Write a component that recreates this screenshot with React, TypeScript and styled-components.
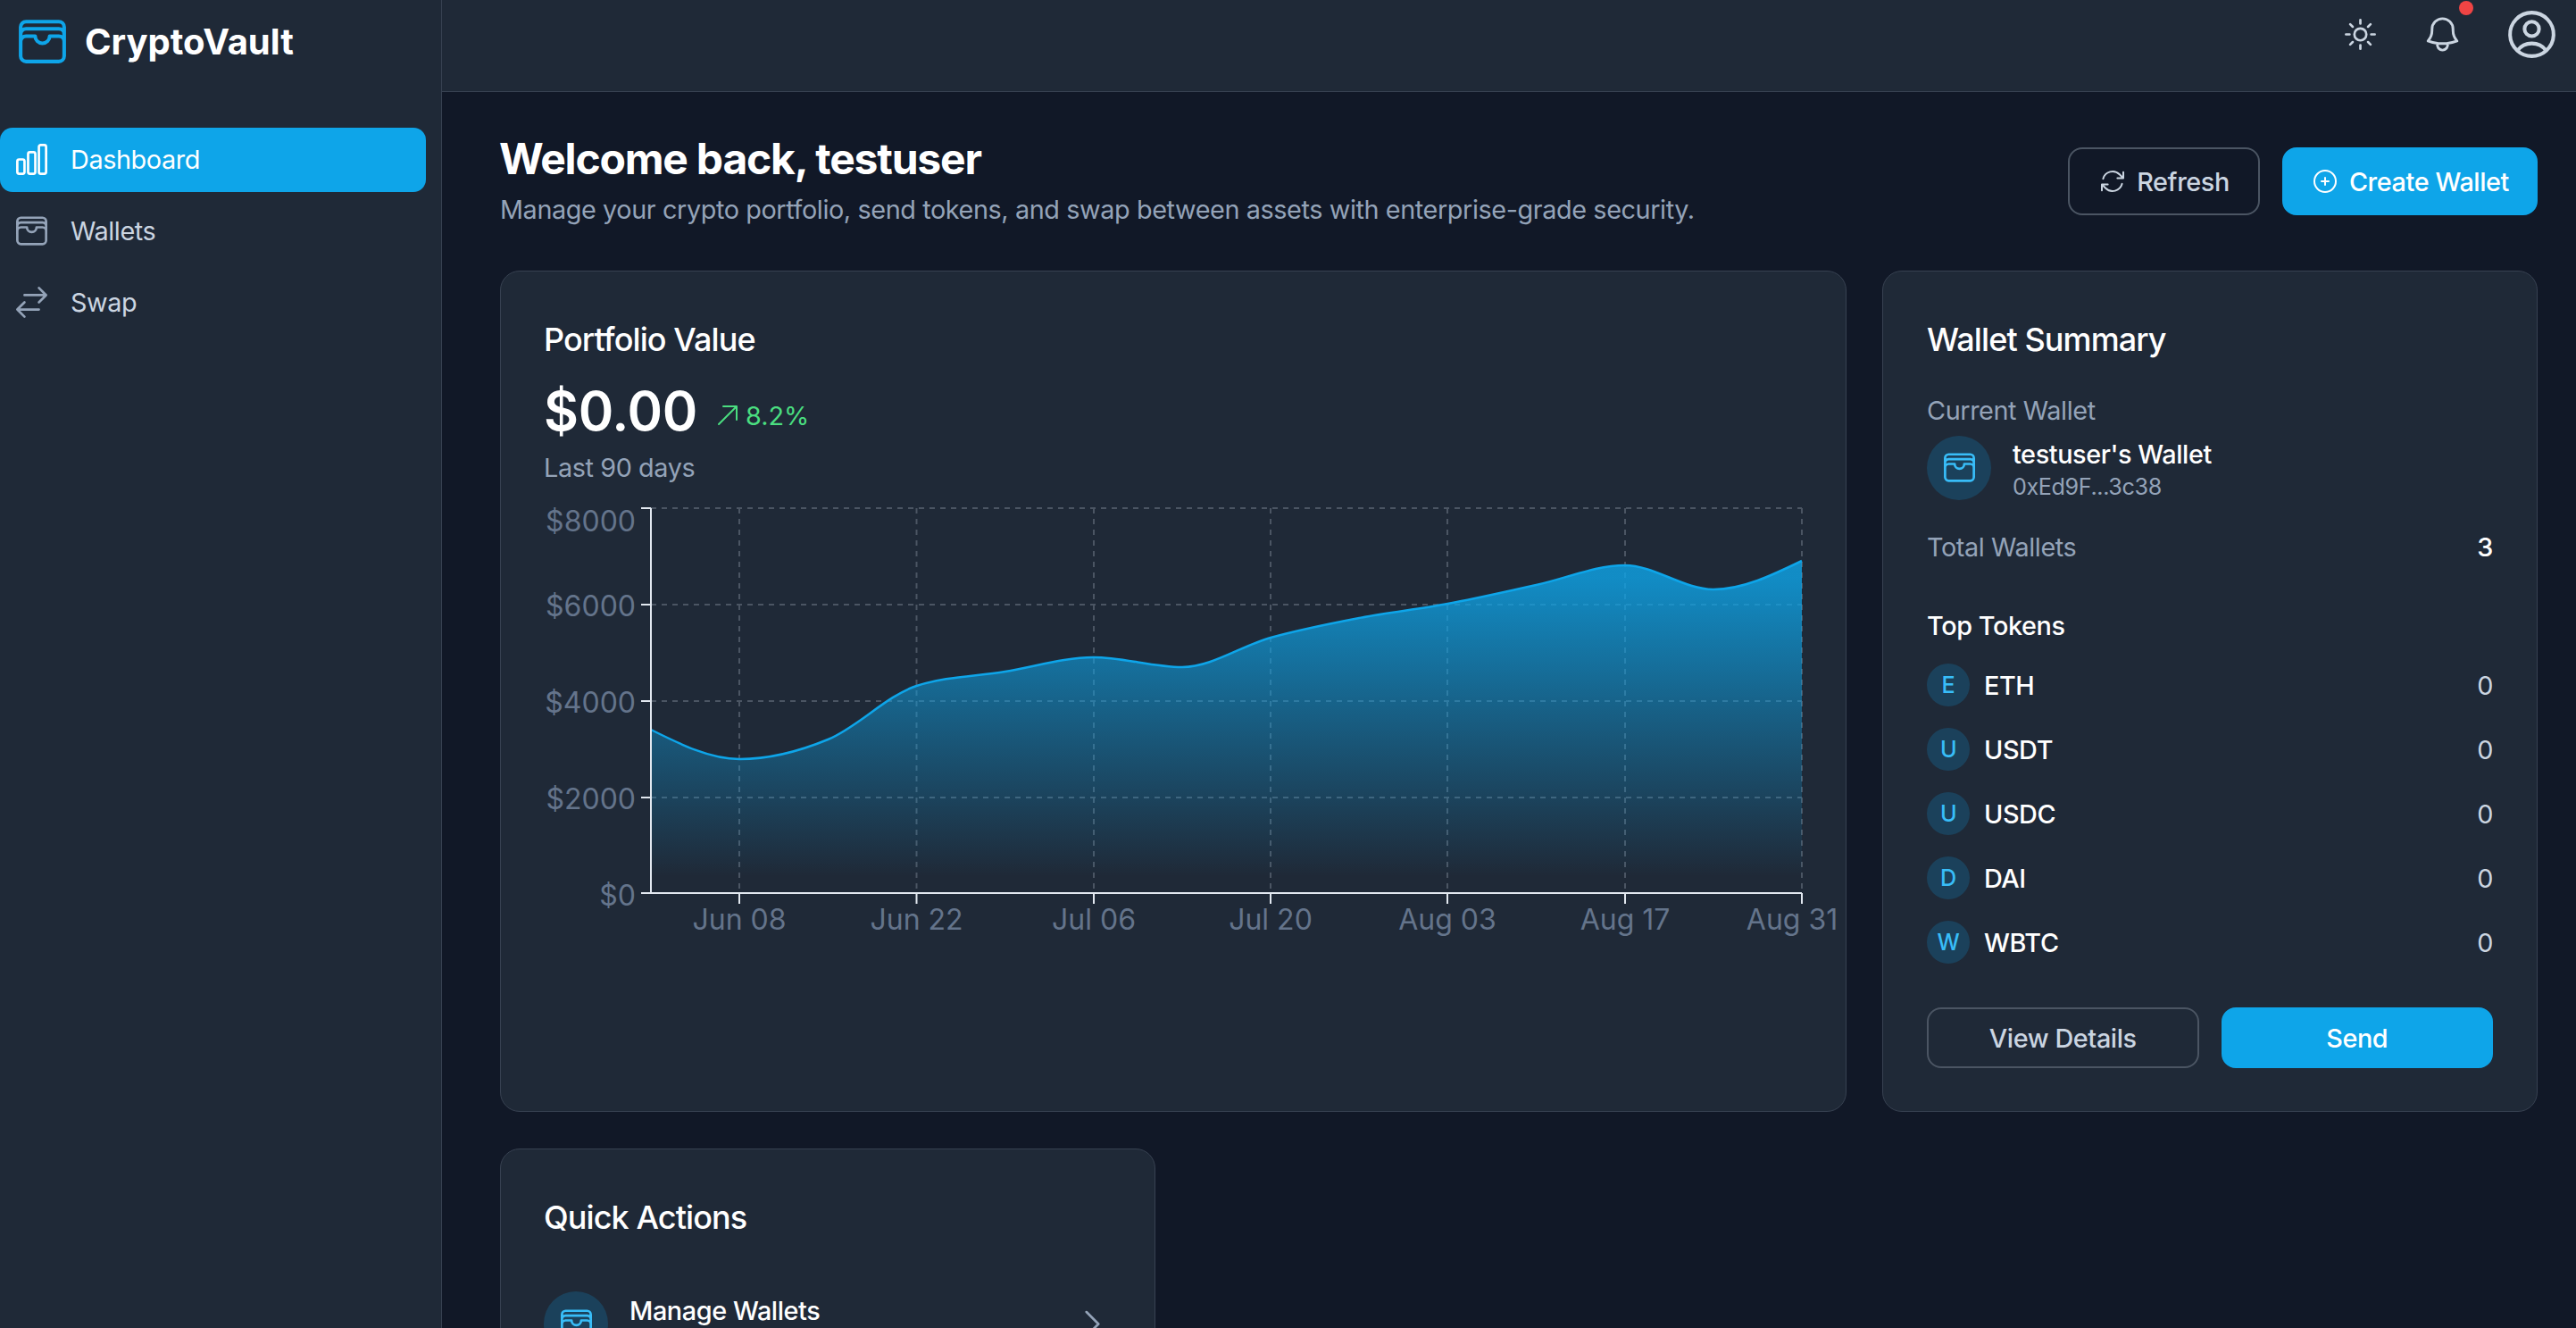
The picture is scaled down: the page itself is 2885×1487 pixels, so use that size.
import React from 'react';
import styled, { createGlobalStyle } from 'styled-components';
import {
    HiOutlineWallet,
    HiOutlineChartBar,
    HiOutlineArrowsRightLeft,
    HiOutlineSun,
    HiOutlineBell,
    HiOutlineUserCircle,
    HiOutlineArrowPath,
    HiOutlinePlusCircle,
    HiOutlineArrowUpRight,
    HiOutlineChevronRight,
} from 'react-icons/hi2';

const GlobalStyle = createGlobalStyle`
  html, body {
    margin: 0;
    height: 100%;
    overflow: hidden;
    background: #111827;
    font-family: Inter, "Liberation Sans", sans-serif;
    letter-spacing: -0.4px;
  }
  * {
    box-sizing: border-box;
  }
`;

const Shell = styled.div`
  display: flex;
  width: 100%;
  height: 100vh;
  overflow: hidden;
`;

const Sidebar = styled.aside`
  flex: 0 0 495px;
  background: #1f2937;
  border-right: 1px solid #374151;
`;

const Brand = styled.div`
  display: flex;
  align-items: center;
  gap: 15px;
  height: 93px;
  padding-left: 15px;
  color: #0ea5e9;
  svg {
    width: 65px;
    height: 65px;
  }
`;

const BrandName = styled.span`
  font-size: 40px;
  font-weight: 700;
  letter-spacing: 0;
  color: #fff;
`;

const Nav = styled.nav`
  display: flex;
  flex-direction: column;
  gap: 8px;
  margin-top: 50px;
  padding-right: 17px;
`;

const NavItem = styled.a<{ $active?: boolean }>`
  display: flex;
  align-items: center;
  gap: 22px;
  height: 72px;
  padding: 0 0 2px 14px;
  border-radius: 14px;
  font-size: 28.8px;
  background: ${({ $active }) => ($active ? '#0ea5e9' : 'transparent')};
  color: ${({ $active }) => ($active ? '#fff' : '#cbd5e1')};
  svg {
    width: 43px;
    height: 43px;
    color: ${({ $active }) => ($active ? '#fff' : '#94a3b8')};
  }
`;

const Column = styled.div`
  flex: 1;
  min-width: 0;
`;

const TopBar = styled.header`
  display: flex;
  align-items: center;
  justify-content: flex-end;
  height: 103px;
  padding: 0 17px 26px 0;
  background: #1f2937;
  border-bottom: 1px solid #374151;
  color: #cbd5e1;
`;

const SunIcon = styled(HiOutlineSun)`
  width: 43px;
  height: 43px;
  margin-right: 47px;
`;

const BellWrap = styled.div`
  position: relative;
  display: flex;
  margin-right: 44px;
  svg {
    width: 47px;
    height: 47px;
  }
`;

const BellDot = styled.span`
  position: absolute;
  top: -14px;
  right: -11px;
  width: 16px;
  height: 16px;
  border-radius: 50%;
  background: #ef4444;
`;

const AvatarIcon = styled(HiOutlineUserCircle)`
  width: 65px;
  height: 65px;
`;

const Main = styled.main`
  padding: 0 43px 0 65px;
`;

const PageHead = styled.div`
  display: flex;
  align-items: flex-start;
  justify-content: space-between;
  height: 200px;
  padding-top: 45px;
`;

const PageTitle = styled.h1`
  margin: 0 0 0 -1px;
  font-size: 48px;
  line-height: 60px;
  font-weight: 700;
  letter-spacing: -1.2px;
  color: #fff;
`;

const PageSubtitle = styled.p`
  margin: 5px 0 0;
  font-size: 28.8px;
  line-height: 43px;
  color: #94a3b8;
`;

const HeadActions = styled.div`
  display: flex;
  gap: 25px;
  padding-top: 17px;
`;

const Button = styled.button<{ $primary?: boolean; $block?: boolean }>`
  display: inline-flex;
  align-items: center;
  justify-content: center;
  gap: 11px;
  height: ${({ $block }) => ($block ? '68px' : '76px')};
  padding: 0 32px;
  flex: ${({ $block }) => ($block ? '1 1 0' : '0 0 auto')};
  border-radius: 16px;
  border: 2px solid ${({ $primary }) => ($primary ? '#0ea5e9' : '#4b5563')};
  background: ${({ $primary }) => ($primary ? '#0ea5e9' : 'transparent')};
  color: ${({ $primary }) => ($primary ? '#fff' : '#cbd5e1')};
  font-family: inherit;
  font-size: 28.8px;
  font-weight: 500;
  letter-spacing: -0.4px;
  svg {
    width: 32px;
    height: 32px;
  }
`;

const CreateButton = styled(Button)`
  padding: 0 30px;
`;

const Grid = styled.div`
  display: grid;
  grid-template-columns: repeat(3, 1fr);
  gap: 41px 40px;
`;

const Card = styled.section<{ $wide?: boolean }>`
  grid-column: ${({ $wide }) => ($wide ? 'span 2' : 'span 1')};
  padding: 49px 48px 48px;
  border: 1px solid #374151;
  border-radius: 22px;
  background: #1f2937;
`;

const WalletCard = styled(Card)`
  padding-left: 49px;
  padding-right: 49px;
`;

const CardTitle = styled.h2`
  margin: 0;
  font-size: 36px;
  line-height: 54px;
  font-weight: 500;
  letter-spacing: -0.9px;
  color: #fff;
`;

const ValueRow = styled.div`
  display: flex;
  align-items: center;
  gap: 18px;
  height: 84px;
  margin-top: 11px;
`;

const Value = styled.span`
  font-size: 60px;
  font-weight: 600;
  letter-spacing: -0.3px;
  color: #fff;
`;

const Change = styled.span`
  display: inline-flex;
  align-items: center;
  gap: 4px;
  padding-top: 10px;
  font-size: 28.8px;
  letter-spacing: 0;
  color: #4ade80;
  svg {
    width: 32px;
    height: 32px;
  }
`;

const Muted = styled.div`
  font-size: 28.8px;
  line-height: 43px;
  color: #94a3b8;
`;

const ChartSvg = styled.svg`
  display: block;
  margin-top: 13px;
  overflow: visible;
  letter-spacing: 0;
`;

const CurrentLabel = styled(Muted)`
  margin-top: 31px;
`;

const WalletRow = styled.div`
  display: flex;
  align-items: center;
  gap: 24px;
  margin-top: 6px;
`;

const IconCircle = styled.div`
  flex: 0 0 72px;
  display: flex;
  align-items: center;
  justify-content: center;
  width: 72px;
  height: 72px;
  border-radius: 50%;
  background: rgba(14, 165, 233, 0.2);
  color: #38bdf8;
  svg {
    width: 43px;
    height: 43px;
  }
`;

const WalletName = styled.div`
  font-size: 28.8px;
  line-height: 43px;
  font-weight: 500;
  color: #fff;
`;

const WalletAddress = styled.div`
  font-size: 25.2px;
  line-height: 30px;
  color: #94a3b8;
`;

const TotalRow = styled.div`
  display: flex;
  align-items: center;
  justify-content: space-between;
  margin-top: 31px;
`;

const TotalCount = styled.span`
  font-size: 28.8px;
  font-weight: 500;
  color: #fff;
`;

const SectionTitle = styled.h3`
  margin: 45px 0 0;
  font-size: 28.8px;
  line-height: 43px;
  font-weight: 500;
  color: #fff;
`;

const TokenList = styled.div`
  display: flex;
  flex-direction: column;
  gap: 24px;
  margin-top: 21px;
`;

const TokenRow = styled.div`
  display: flex;
  align-items: center;
  height: 48px;
`;

const TokenBadge = styled.span`
  display: flex;
  align-items: center;
  justify-content: center;
  width: 48px;
  height: 48px;
  margin-right: 16px;
  border-radius: 50%;
  background: rgba(14, 165, 233, 0.2);
  color: #38bdf8;
  font-size: 25.2px;
  font-weight: 500;
`;

const TokenName = styled.span`
  flex: 1;
  font-size: 28.8px;
  font-weight: 500;
  color: #fff;
`;

const TokenAmount = styled.span`
  font-size: 28.8px;
  color: #cbd5e1;
`;

const CardActions = styled.div`
  display: flex;
  gap: 25px;
  margin-top: 49px;
`;

const QuickCard = styled(Card)`
  height: 300px;
`;

const ActionRow = styled.div`
  display: flex;
  align-items: center;
  gap: 24px;
  margin-top: 56px;
`;

const ActionName = styled(WalletName)`
  flex: 1;
  align-self: flex-start;
`;

const ActionChevron = styled(HiOutlineChevronRight)`
  width: 43px;
  height: 43px;
  color: #94a3b8;
`;

type Point = [number, number];

// weekly portfolio samples, already in chart pixels
const plot = { left: 120, right: 1409, top: 11, bottom: 442 };
const samples = [259, 292, 270, 210, 194, 178, 189, 156, 134, 118, 97, 75, 102, 70];
const series: Point[] = samples.map((y, i) => [
    plot.left + (i * (plot.right - plot.left)) / (samples.length - 1),
    y,
]);

const sign = (n: number) => (n < 0 ? -1 : 1);

// same monotone-x interpolation a charting library would use
const monotonePath = (points: Point[]) => {
    const slopes = points.map((p, i) => {
        const prev = points[i - 1];
        const next = points[i + 1];
        if (!prev || !next) return 0;
        const h0 = p[0] - prev[0];
        const h1 = next[0] - p[0];
        const s0 = (p[1] - prev[1]) / h0;
        const s1 = (next[1] - p[1]) / h1;
        const mid = (s0 * h1 + s1 * h0) / (h0 + h1);
        return (sign(s0) + sign(s1)) * Math.min(Math.abs(s0), Math.abs(s1), 0.5 * Math.abs(mid)) || 0;
    });
    const last = points.length - 1;
    slopes[0] = (3 * (points[1][1] - points[0][1])) / (points[1][0] - points[0][0]) / 2 - slopes[1] / 2;
    slopes[last] = (3 * (points[last][1] - points[last - 1][1])) / (points[last][0] - points[last - 1][0]) / 2 - slopes[last - 1] / 2;

    let d = `M${points[0][0]},${points[0][1]}`;
    for (let i = 0; i < last; i++) {
        const [x0, y0] = points[i];
        const [x1, y1] = points[i + 1];
        const dx = (x1 - x0) / 3;
        d += ` C${x0 + dx},${y0 + dx * slopes[i]} ${x1 - dx},${y1 - dx * slopes[i + 1]} ${x1},${y1}`;
    }
    return d;
};

const yTicks = [
    { y: 11, label: '$8000', labelY: 26 },
    { y: 119, label: '$6000', labelY: 121 },
    { y: 227, label: '$4000', labelY: 229 },
    { y: 335, label: '$2000', labelY: 337 },
    { y: 442, label: '$0', labelY: 445 },
];
const xTicks = [
    { x: 219, label: 'Jun 08', labelX: 219 },
    { x: 417.5, label: 'Jun 22', labelX: 417.5 },
    { x: 616, label: 'Jul 06', labelX: 616 },
    { x: 814, label: 'Jul 20', labelX: 814 },
    { x: 1012, label: 'Aug 03', labelX: 1012 },
    { x: 1211, label: 'Aug 17', labelX: 1211 },
    { x: 1409, label: 'Aug 31', labelX: 1398 },
];

const PortfolioChart = () => {
    const line = monotonePath(series);
    const area = `${line} L${plot.right},${plot.bottom} L${plot.left},${plot.bottom} Z`;

    return (
        <ChartSvg width="1410" height="500" viewBox="0 0 1410 500">
            <defs>
                <linearGradient id="portfolioFill" x1="0" y1="0" x2="0" y2="1">
                    <stop offset="5%" stopColor="#0ea5e9" stopOpacity={0.8} />
                    <stop offset="95%" stopColor="#0ea5e9" stopOpacity={0} />
                </linearGradient>
            </defs>
            <g stroke="#4b5563" strokeWidth="2" strokeDasharray="6 6">
                {yTicks.slice(0, 4).map((t) => (
                    <line key={t.label} x1={plot.left} x2={plot.right} y1={t.y} y2={t.y} />
                ))}
                {xTicks.map((t) => (
                    <line key={t.label} x1={t.x} x2={t.x} y1={plot.top} y2={plot.bottom} />
                ))}
            </g>
            <path d={area} fill="url(#portfolioFill)" />
            <path d={line} fill="none" stroke="#0ea5e9" strokeWidth="2.5" />
            <g stroke="#e2e8f0" strokeWidth="2">
                <line x1={plot.left} x2={plot.left} y1={plot.top} y2={plot.bottom} />
                <line x1={plot.left} x2={plot.right} y1={plot.bottom} y2={plot.bottom} />
                {yTicks.map((t) => (
                    <line key={t.label} x1={plot.left - 11} x2={plot.left} y1={t.y} y2={t.y} />
                ))}
                {xTicks.map((t) => (
                    <line key={t.label} x1={t.x} x2={t.x} y1={plot.bottom} y2={plot.bottom + 12} />
                ))}
            </g>
            <g fill="#64748b" fontSize="32" fontFamily="Inter, sans-serif">
                {yTicks.map((t) => (
                    <text key={t.label} x={plot.left - 17} y={t.labelY + 11} textAnchor="end">{t.label}</text>
                ))}
                {xTicks.map((t) => (
                    <text key={t.label} x={t.labelX} y={plot.bottom + 41} textAnchor="middle">{t.label}</text>
                ))}
            </g>
        </ChartSvg>
    );
};

const tokens = [
    { symbol: 'ETH', amount: '0' },
    { symbol: 'USDT', amount: '0' },
    { symbol: 'USDC', amount: '0' },
    { symbol: 'DAI', amount: '0' },
    { symbol: 'WBTC', amount: '0' },
];

const App = () => (
    <Shell>
        <GlobalStyle />
        <Sidebar>
            <Brand>
                <HiOutlineWallet />
                <BrandName>CryptoVault</BrandName>
            </Brand>
            <Nav>
                <NavItem $active><HiOutlineChartBar />Dashboard</NavItem>
                <NavItem><HiOutlineWallet />Wallets</NavItem>
                <NavItem><HiOutlineArrowsRightLeft />Swap</NavItem>
            </Nav>
        </Sidebar>
        <Column>
            <TopBar>
                <SunIcon />
                <BellWrap>
                    <HiOutlineBell />
                    <BellDot />
                </BellWrap>
                <AvatarIcon />
            </TopBar>
            <Main>
                <PageHead>
                    <div>
                        <PageTitle>Welcome back, testuser</PageTitle>
                        <PageSubtitle>Manage your crypto portfolio, send tokens, and swap between assets with enterprise-grade security.</PageSubtitle>
                    </div>
                    <HeadActions>
                        <Button><HiOutlineArrowPath />Refresh</Button>
                        <CreateButton $primary><HiOutlinePlusCircle />Create Wallet</CreateButton>
                    </HeadActions>
                </PageHead>
                <Grid>
                    <Card $wide>
                        <CardTitle>Portfolio Value</CardTitle>
                        <ValueRow>
                            <Value>$0.00</Value>
                            <Change><HiOutlineArrowUpRight />8.2%</Change>
                        </ValueRow>
                        <Muted>Last 90 days</Muted>
                        <PortfolioChart />
                    </Card>
                    <WalletCard>
                        <CardTitle>Wallet Summary</CardTitle>
                        <CurrentLabel>Current Wallet</CurrentLabel>
                        <WalletRow>
                            <IconCircle><HiOutlineWallet /></IconCircle>
                            <div>
                                <WalletName>testuser's Wallet</WalletName>
                                <WalletAddress>0xEd9F...3c38</WalletAddress>
                            </div>
                        </WalletRow>
                        <TotalRow>
                            <Muted>Total Wallets</Muted>
                            <TotalCount>3</TotalCount>
                        </TotalRow>
                        <SectionTitle>Top Tokens</SectionTitle>
                        <TokenList>
                            {tokens.map((token) => (
                                <TokenRow key={token.symbol}>
                                    <TokenBadge>{token.symbol[0]}</TokenBadge>
                                    <TokenName>{token.symbol}</TokenName>
                                    <TokenAmount>{token.amount}</TokenAmount>
                                </TokenRow>
                            ))}
                        </TokenList>
                        <CardActions>
                            <Button $block>View Details</Button>
                            <Button $block $primary>Send</Button>
                        </CardActions>
                    </WalletCard>
                    <QuickCard>
                        <CardTitle>Quick Actions</CardTitle>
                        <ActionRow>
                            <IconCircle><HiOutlineWallet /></IconCircle>
                            <ActionName>Manage Wallets</ActionName>
                            <ActionChevron />
                        </ActionRow>
                    </QuickCard>
                </Grid>
            </Main>
        </Column>
    </Shell>
);

export default App;
